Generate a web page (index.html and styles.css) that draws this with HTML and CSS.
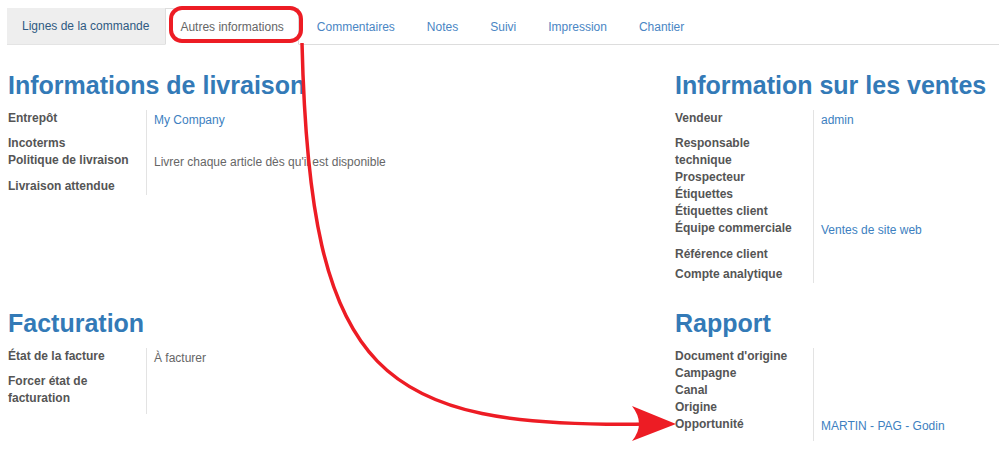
FILE: index.html
```html
<!DOCTYPE html>
<html lang="fr">
<head>
<meta charset="utf-8">
<title>Autres informations</title>
<link rel="stylesheet" href="styles.css">
</head>
<body>
<nav class="tabs">
  <a class="tab tab-first">Lignes de la commande</a>
  <a class="tab tab-active">Autres informations</a>
  <a class="tab">Commentaires</a>
  <a class="tab">Notes</a>
  <a class="tab">Suivi</a>
  <a class="tab">Impression</a>
  <a class="tab">Chantier</a>
</nav>

<main class="sheet">
  <section class="col">
    <h2 class="title">Informations de livraison</h2>
    <div class="group">
      <div class="row r25"><div class="lbl">Entrepôt</div><div class="val link">My Company</div></div>
      <div class="row r17"><div class="lbl">Incoterms</div><div class="val"></div></div>
      <div class="row r26"><div class="lbl">Politique de livraison</div><div class="val">Livrer chaque article dès qu'il est disponible</div></div>
      <div class="row r17"><div class="lbl">Livraison attendue</div><div class="val"></div></div>
    </div>
  </section>

  <section class="col">
    <h2 class="title">Information sur les ventes</h2>
    <div class="group">
      <div class="row r25"><div class="lbl">Vendeur</div><div class="val link">admin</div></div>
      <div class="row r34"><div class="lbl">Responsable technique</div><div class="val"></div></div>
      <div class="row r17"><div class="lbl">Prospecteur</div><div class="val"></div></div>
      <div class="row r17"><div class="lbl">Étiquettes</div><div class="val"></div></div>
      <div class="row r17"><div class="lbl">Étiquettes client</div><div class="val"></div></div>
      <div class="row r26"><div class="lbl">Équipe commerciale</div><div class="val link">Ventes de site web</div></div>
      <div class="row r20"><div class="lbl">Référence client</div><div class="val"></div></div>
      <div class="row r17"><div class="lbl">Compte analytique</div><div class="val"></div></div>
    </div>
  </section>

  <section class="col">
    <h2 class="title">Facturation</h2>
    <div class="group">
      <div class="row r25"><div class="lbl">État de la facture</div><div class="val">À facturer</div></div>
      <div class="row r41"><div class="lbl">Forcer état de facturation</div><div class="val"></div></div>
    </div>
  </section>

  <section class="col">
    <h2 class="title">Rapport</h2>
    <div class="group">
      <div class="row r17"><div class="lbl">Document d'origine</div><div class="val"></div></div>
      <div class="row r17"><div class="lbl">Campagne</div><div class="val"></div></div>
      <div class="row r17"><div class="lbl">Canal</div><div class="val"></div></div>
      <div class="row r17"><div class="lbl">Origine</div><div class="val"></div></div>
      <div class="row r25"><div class="lbl">Opportunité</div><div class="val link">MARTIN - PAG - Godin</div></div>
    </div>
  </section>
</main>

<svg class="annot" width="999" height="450" viewBox="0 0 999 450" aria-hidden="true">
  <rect x="171" y="8" width="130" height="33" rx="11" ry="11" fill="none" stroke="#ed1c24" stroke-width="4"/>
  <path d="M302,43 C310,380 380,428 648,424" fill="none" stroke="#ed1c24" stroke-width="3.5"/>
  <path d="M676,424 L632,406 Q646,424 632,441 Z" fill="#ed1c24"/>
</svg>
</body>
</html>
```

FILE: styles.css
```css
html, body {
  margin: 0;
  padding: 0;
  background: #ffffff;
}

body {
  position: relative;
  width: 999px;
  height: 450px;
  overflow: hidden;
  font-family: "Liberation Sans", Arial, sans-serif;
  font-size: 12px;
  color: #555555;
}

.tabs {
  display: flex;
  margin: 8px 0 0 7px;
  height: 36px;
  border-bottom: 1px solid #dddddd;
}

.tab {
  display: flex;
  align-items: center;
  padding: 0 15px;
  margin-right: 2px;
  margin-bottom: -1px;
  color: #4a86c4;
  font-size: 12px;
  white-space: nowrap;
}

.tab-first {
  background: #eeeeee;
  color: #2f5a82;
  padding: 0 16px 0 15px;
  margin-right: 0;
  border-bottom: 1px solid #e4e4e4;
}

.tab-active {
  background: #ffffff;
  color: #666666;
  border: 1px solid #dddddd;
  border-bottom: 1px solid #ffffff;
  padding: 0 14px;
  margin-right: 3px;
}

.sheet {
  display: grid;
  grid-template-columns: 667px 1fr;
  row-gap: 25px;
  padding: 25px 0 0 8px;
}

.title {
  margin: 0 0 10px 0;
  height: 30px;
  line-height: 30px;
  font-size: 25px;
  font-weight: bold;
  color: #337ab7;
  white-space: nowrap;
}

.group {
  display: flex;
  flex-direction: column;
}

.row {
  display: flex;
  line-height: 17px;
}

.r17 { height: 17px; }
.r20 { height: 20px; }
.r25 { height: 25px; }
.r26 { height: 26px; }
.r34 { height: 34px; }
.r41 { height: 41px; }

.lbl {
  width: 138px;
  flex: none;
  box-sizing: border-box;
  padding-right: 8px;
  font-weight: bold;
  color: #555555;
}

.val {
  flex: 1;
  border-left: 1px solid #e3e3e3;
  padding: 2px 0 0 7px;
  color: #666666;
  white-space: nowrap;
}

.link {
  color: #3d7fbf;
}

.annot {
  position: absolute;
  left: 0;
  top: 0;
  pointer-events: none;
}
```
